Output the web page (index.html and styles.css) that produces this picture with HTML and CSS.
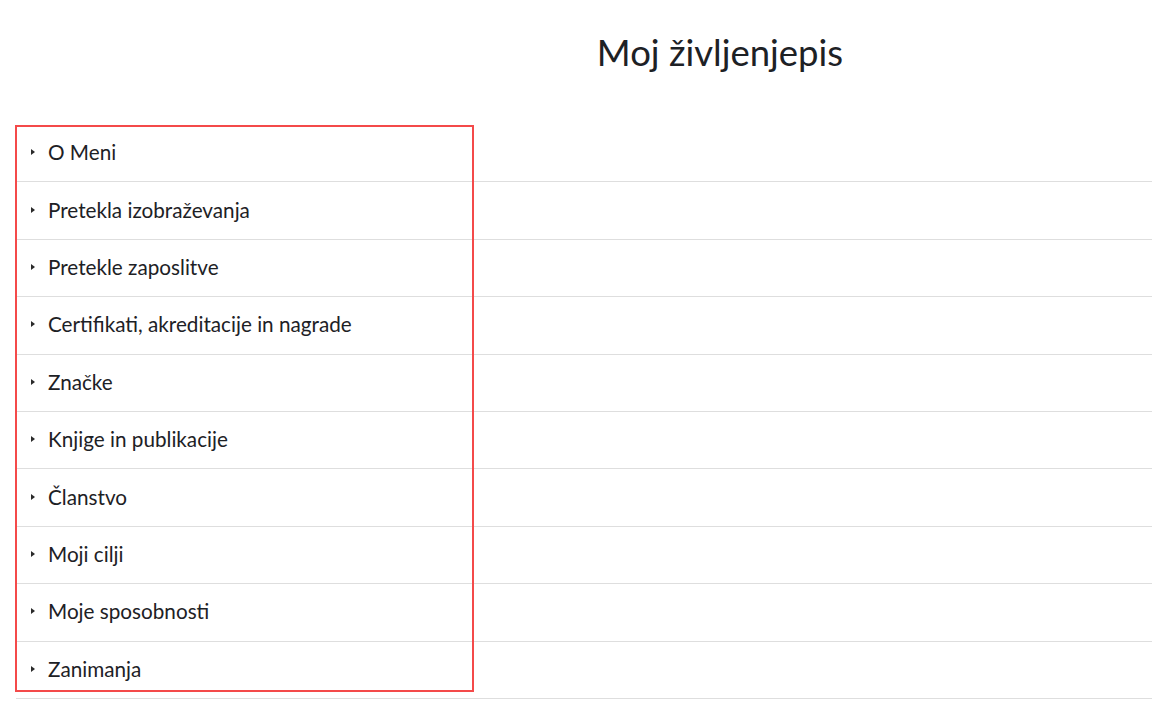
FILE: index.html
```html
<!DOCTYPE html>
<html lang="sl">
<head>
  <meta charset="UTF-8" />
  <title>Moj življenjepis</title>
  <link rel="stylesheet" href="styles.css">
</head>
<body>
  <div class="page">
    <header>
      <h1>Moj življenjepis</h1>
    </header>
    <main>
      <div class="cv-list">
        <ul class="sections">
          <li><span class="caret"></span>O Meni</li>
          <li><span class="caret"></span>Pretekla izobraževanja</li>
          <li><span class="caret"></span>Pretekle zaposlitve</li>
          <li><span class="caret"></span>Certifikati, akreditacije in nagrade</li>
          <li><span class="caret"></span>Značke</li>
          <li><span class="caret"></span>Knjige in publikacije</li>
          <li><span class="caret"></span>Članstvo</li>
          <li><span class="caret"></span>Moji cilji</li>
          <li><span class="caret"></span>Moje sposobnosti</li>
          <li><span class="caret"></span>Zanimanja</li>
        </ul>
        <div class="highlight"></div>
      </div>
    </main>
  </div>
</body>
</html>
```

FILE: styles.css
```css
* { box-sizing: border-box; margin: 0; padding: 0; }
html, body { height: 100%; }
body {
  font-family: 'Lato', 'Noto Sans', sans-serif;
  background: #ffffff;
  color: #1d2125;
  overflow: hidden;
}
header {
  height: 125px;
  padding-left: 288px;
  padding-top: 30px;
  text-align: center;
}
header h1 {
  font-size: 36.5px;
  font-weight: 400;
  line-height: 44px;
}
.cv-list {
  position: relative;
  margin-left: 16px;
}
.sections { list-style: none; }
.sections li {
  display: flex;
  align-items: center;
  height: 57.4px;
  border-bottom: 1px solid #dedede;
  font-size: 20.7px;
  padding-left: 15px;
  padding-bottom: 2px;
}
.caret {
  width: 0; height: 0;
  border-left: 4px solid #2a2a2a;
  border-top: 3px solid transparent;
  border-bottom: 3px solid transparent;
  margin-right: 13px;
}
.highlight {
  position: absolute;
  left: -1px; top: 0;
  width: 459px; height: 567px;
  border: 2px solid #f44a4a;
}
```
